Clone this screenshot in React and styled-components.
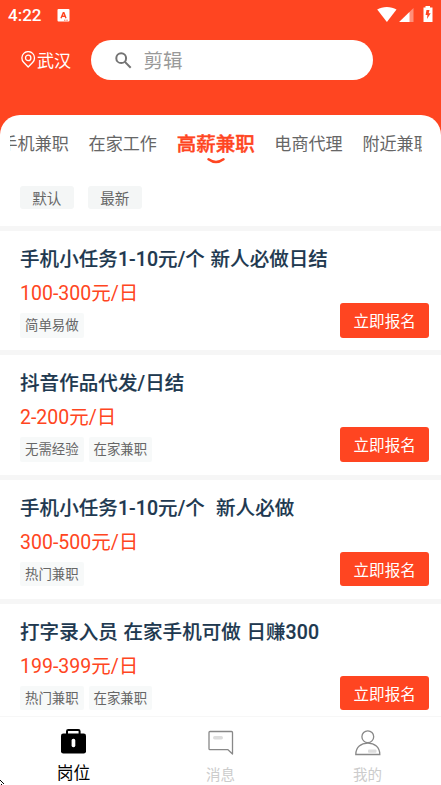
import React, { useState } from "react";
import styled, { createGlobalStyle } from "styled-components";

const GlobalStyle = createGlobalStyle`
  * {
    box-sizing: border-box;
  }

  body {
    margin: 0;
    overflow: hidden;
    font-family: Roboto, 'Noto Sans CJK SC', sans-serif;
    background: #fff;
  }

  button {
    border: none;
    padding: 0;
    font-family: inherit;
    cursor: pointer;
  }
`;

const Pantalla = styled.div`
  position: relative;
  width: 441px;
  height: 785px;
  display: flex;
  flex-direction: column;
  overflow: hidden;
  background: #ff4521;
`;

const StatusBar = styled.div`
  height: 30px;
  flex-shrink: 0;
  display: flex;
  align-items: center;
  padding: 0 7px 0 8px;
  color: #fff;
`;

const Clock = styled.span`
  width: 49px;
  font-size: 17px;
  font-weight: 500;
  line-height: 30px;
`;

const StatusIcons = styled.div`
  display: flex;
  margin-left: auto;
  margin-top: -2px;
`;

const Header = styled.header`
  height: 85px;
  flex-shrink: 0;
  display: flex;
  align-items: flex-start;
  padding: 10.3px 0 0 21px;
`;

const Location = styled.div`
  width: 69.5px;
  height: 38px;
  display: flex;
  align-items: center;
  gap: 1px;
  color: #fff;
  font-size: 17px;
`;

const SearchBox = styled.div`
  width: 282px;
  height: 39.5px;
  display: flex;
  align-items: center;
  gap: 12px;
  padding-left: 24px;
  border-radius: 20px;
  background: #fff;
  color: #999;
  font-size: 19.5px;
  line-height: 30px;
`;

const Placeholder = styled.span`
  padding-top: 4px;
`;

const Sheet = styled.main`
  height: 600.5px;
  flex-shrink: 0;
  overflow: hidden;
  border-radius: 20px 20px 0 0;
  background: #fff;
`;

const Tabs = styled.nav`
  height: 58px;
  margin: 0 19.5px 0 10px;
  display: flex;
  gap: 19.7px;
  overflow: hidden;
`;

const Tab = styled.button`
  flex-shrink: 0;
  height: 58px;
  display: flex;
  flex-direction: column;
  align-items: center;
  background: none;
  color: ${(p) => (p.$active ? "#ff4521" : "#666")};
  font-size: ${(p) => (p.$active ? "19.5px" : "17.1px")};
  font-weight: ${(p) => (p.$active ? 500 : 400)};
  -webkit-text-stroke: ${(p) => (p.$active ? "0.4px #ff4521" : "0")};
  line-height: ${(p) => (p.$active ? "60px" : "58px")};

  &:first-child {
    margin-left: -9.5px;
  }

  svg {
    flex-shrink: 0;
    margin-top: -17px;
  }
`;

const Filters = styled.div`
  height: 53px;
  display: flex;
  gap: 14.5px;
  padding: 13px 0 0 20px;
`;

const Filter = styled.button`
  width: 53.5px;
  height: 23px;
  border-radius: 3px;
  background: #f4f6f6;
  color: #666;
  font-size: 14.6px;
  line-height: 26px;
`;

const Card = styled.article`
  height: 124.3px;
  display: flex;
  flex-direction: column;
  padding: 14px 12px 0 20px;
  border-top: 5px solid #f6f6f6;
`;

const Title = styled.h2`
  margin: 0;
  color: #20384f;
  font-size: 19.5px;
  font-weight: 500;
  letter-spacing: 0.08px;
  word-spacing: 0.6px;
  line-height: 30px;
  white-space: pre;
  -webkit-text-stroke: 0.15px #20384f;
`;

const Salary = styled.p`
  margin: 4px 0 0;
  color: #ff4521;
  font-size: 19.5px;
  line-height: 30px;
`;

const CardFooter = styled.div`
  display: flex;
  align-items: flex-end;
  gap: 5px;
  margin-top: -6px;
`;

const Tag = styled.span`
  height: 24.5px;
  padding: 0 5px;
  border-radius: 2px;
  background: #f7f9f9;
  color: #666;
  font-size: 13.4px;
  line-height: 26.5px;
`;

const ApplyButton = styled.button`
  width: 88.7px;
  height: 34.5px;
  margin-left: auto;
  border-radius: 3px;
  background: #ff4521;
  color: #fff;
  font-size: 15.6px;
  line-height: 38.5px;
`;

const BottomNav = styled.footer`
  height: 70px;
  flex-shrink: 0;
  display: flex;
  border-top: 1px solid #f7f7f7;
  background: #fff;
`;

const NavItem = styled.button`
  width: 147px;
  display: flex;
  flex-direction: column;
  align-items: center;
  padding-top: ${(p) => (p.$active ? "11.5px" : "13.5px")};
  background: none;
  color: ${(p) => (p.$active ? "#000" : "#ccc")};
  font-size: ${(p) => (p.$active ? "16.8px" : "14.5px")};
  line-height: 24px;

  svg {
    flex-shrink: 0;
    margin-bottom: ${(p) => (p.$active ? "7px" : "8px")};
  }
`;

const Pointer = styled.svg`
  position: absolute;
  left: 0;
  bottom: 0;
`;

const tabs = ["手机兼职", "在家工作", "高薪兼职", "电商代理", "附近兼职"];

const jobs = [
  { title: "手机小任务1-10元/个 新人必做日结", salary: "100-300元/日", tags: ["简单易做"] },
  { title: "抖音作品代发/日结", salary: "2-200元/日", tags: ["无需经验", "在家兼职"] },
  { title: "手机小任务1-10元/个  新人必做", salary: "300-500元/日", tags: ["热门兼职"] },
  { title: "打字录入员 在家手机可做 日赚300", salary: "199-399元/日", tags: ["热门兼职", "在家兼职"] },
];

const AppBadge = () => (
  <svg width="13" height="13" viewBox="0 0 13 13">
    <rect x="0.5" y="0" width="12" height="12.5" rx="1" fill="#fff" />
    <path d="M4 9.2 6.3 3.7h.6L9 9.2M4.9 7.3h3.3" fill="none" stroke="#ff4521" strokeWidth="1.4" />
    <path d="M7 11.2h1.5M9.3 11.2h1.5" stroke="#ff4521" strokeWidth="0.8" />
  </svg>
);

const SystemIcons = () => (
  <svg width="57" height="18" viewBox="377.5 5 57 18">
    <path d="M377.7 9.5C382.8 6 391.8 6 397 9.5L387.4 22z" fill="#fff" />
    <path d="M399.7 22 414 8v14z" fill="#ff8f7a" />
    <path d="M399.7 22 410 11.9V22z" fill="#fff" />
    <path d="M424 7.5h2V6h4.5v1.5h2.5V22h-9z" fill="#fff" />
    <path d="M427 10h3l-.8 3.3h2L427.5 19l.4-4h-1.8z" fill="#ff4521" />
  </svg>
);

const PinIcon = () => (
  <svg width="15" height="17" viewBox="0 0 15 17" fill="none" stroke="#fff" strokeWidth="1.3">
    <path d="M7.2 16 2.6 11.2a6.3 6.3 0 1 1 9.2 0z" strokeLinejoin="round" />
    <circle cx="7.2" cy="6.9" r="2.7" />
  </svg>
);

const SearchIcon = () => (
  <svg width="17" height="17" viewBox="0 0 17 17" fill="none" stroke="#737373" strokeWidth="2">
    <circle cx="6.2" cy="6.2" r="4.9" />
    <path d="m9.9 9.9 5.8 5.9" />
  </svg>
);

const Smile = () => (
  <svg width="18" height="6" viewBox="0 0 18 6" fill="none">
    <path d="M1.5 1.3Q9 6.8 16.5 1.3" stroke="#ff4521" strokeWidth="2.4" strokeLinecap="round" />
  </svg>
);

const BriefcaseIcon = () => (
  <svg width="25" height="26" viewBox="0 0 25 26">
    <path d="M6 7V3.2Q6 1.9 7.3 1.9h10Q18.6 1.9 18.6 3.2V7" fill="none" stroke="#000" strokeWidth="2" />
    <rect x="0" y="5.5" width="25" height="20" rx="2.3" fill="#000" />
    <rect x="10.6" y="10.7" width="3.7" height="8.5" rx="1.7" fill="#fff" />
  </svg>
);

const MessageIcon = () => (
  <svg width="26" height="26" viewBox="0 0 26 26" fill="none">
    <path d="M2 1.5h21.5q1 0 1 1v21.5l-4.5-4.3H2q-1 0-1-1V2.500q0-1 1-1z" stroke="#888" strokeWidth="1.3" strokeLinejoin="round" />
    <rect x="5" y="6" width="10" height="3.5" rx="1.7" fill="#ddd" />
  </svg>
);

const UserIcon = () => (
  <svg width="26" height="26" viewBox="0 0 26 26" fill="none">
    <circle cx="12.8" cy="6.7" r="5.9" stroke="#888" strokeWidth="1.3" />
    <path d="M.8 24.5C.8 17 6 13.2 12.8 13.2S24.8 17 24.8 24.5z" stroke="#888" strokeWidth="1.3" />
    <rect x="13" y="19.4" width="8.5" height="3.3" rx="1" fill="#ddd" />
  </svg>
);

const App = () => {
  const [activeTab, setActiveTab] = useState(2);

  return (
    <>
      <GlobalStyle />
      <Pantalla>
        <StatusBar>
          <Clock>4:22</Clock>
          <AppBadge />
          <StatusIcons>
            <SystemIcons />
          </StatusIcons>
        </StatusBar>
        <Header>
          <Location>
            <PinIcon />
            武汉
          </Location>
          <SearchBox>
            <SearchIcon />
            <Placeholder>剪辑</Placeholder>
          </SearchBox>
        </Header>
        <Sheet>
          <Tabs>
            {tabs.map((name, i) => (
              <Tab key={name} $active={i === activeTab} onClick={() => setActiveTab(i)}>
                {name}
                {i === activeTab && <Smile />}
              </Tab>
            ))}
          </Tabs>
          <Filters>
            <Filter>默认</Filter>
            <Filter>最新</Filter>
          </Filters>
          {jobs.map((job) => (
            <Card key={job.title}>
              <Title>{job.title}</Title>
              <Salary>{job.salary}</Salary>
              <CardFooter>
                {job.tags.map((tag) => (
                  <Tag key={tag}>{tag}</Tag>
                ))}
                <ApplyButton>立即报名</ApplyButton>
              </CardFooter>
            </Card>
          ))}
        </Sheet>
        <BottomNav>
          <NavItem $active>
            <BriefcaseIcon />
            岗位
          </NavItem>
          <NavItem>
            <MessageIcon />
            消息
          </NavItem>
          <NavItem>
            <UserIcon />
            我的
          </NavItem>
        </BottomNav>
        <Pointer width="5" height="5" viewBox="0 0 5 5" shapeRendering="crispEdges">
          <path d="M0 0h1v1h1v1h1v1h1v1h-1v-1h-1v-1h-1v-1h-1zM1 4h1v1h-1z" fill="#000" />
        </Pointer>
      </Pantalla>
    </>
  );
};

export default App;
